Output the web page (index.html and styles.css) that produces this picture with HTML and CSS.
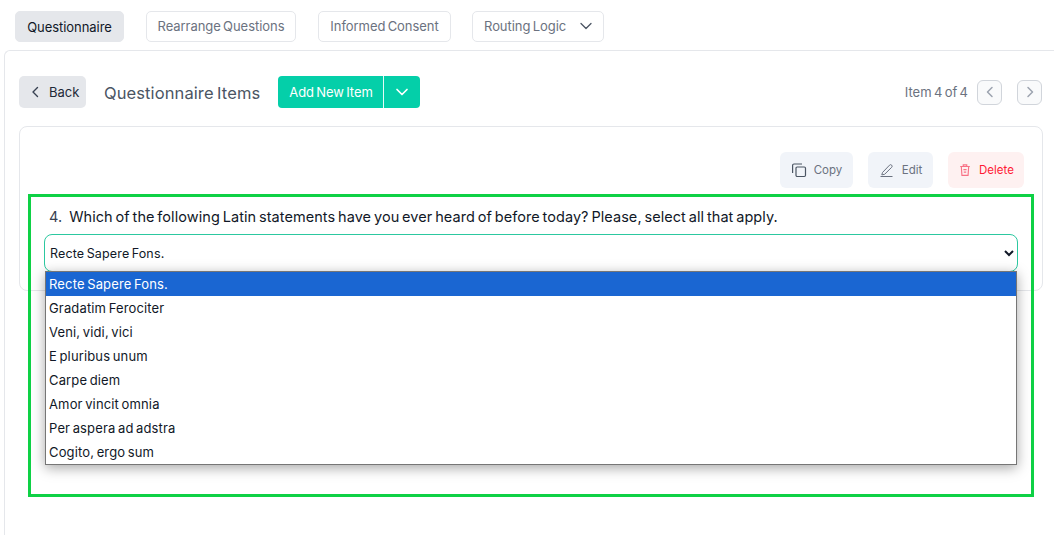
FILE: index.html
```html
<!DOCTYPE html>
<html lang="en">
<head>
<meta charset="utf-8">
<title>Questionnaire Items</title>
<link rel="stylesheet" href="styles.css">
</head>
<body>
<nav class="tabs">
  <a class="tab tab-active">Questionnaire</a>
  <a class="tab tab-rearrange">Rearrange Questions</a>
  <a class="tab tab-consent">Informed Consent</a>
  <a class="tab tab-menu">Routing Logic
    <svg class="tab-chev" viewBox="0 0 14 14" width="14" height="14"><path d="M2 4.5 7 9.5 12 4.5" fill="none" stroke="#4b5563" stroke-width="1.3" stroke-linecap="round" stroke-linejoin="round"/></svg>
  </a>
</nav>
<main class="panel">
  <header class="head">
    <button class="back">
      <svg viewBox="0 0 12 14" width="12" height="14"><path d="M8.5 2.5 4 7l4.5 4.5" fill="none" stroke="#374151" stroke-width="1.4" stroke-linecap="round" stroke-linejoin="round"/></svg>
      Back
    </button>
    <h1 class="title">Questionnaire Items</h1>
    <div class="split">
      <span class="split-main">Add New Item</span>
      <span class="split-arrow"><svg viewBox="0 0 14 14" width="14" height="14"><path d="M2 4.5 7 9.5 12 4.5" fill="none" stroke="#fff" stroke-width="1.7" stroke-linecap="round" stroke-linejoin="round"/></svg></span>
    </div>
    <div class="pager">
      <span class="pager-text">Item 4 of 4</span>
      <span class="pager-btn"><svg viewBox="0 0 14 14" width="14" height="14"><path d="M9 2.5 4.5 7 9 11.5" fill="none" stroke="#9ca3af" stroke-width="1.5" stroke-linecap="round" stroke-linejoin="round"/></svg></span>
      <span class="pager-btn"><svg viewBox="0 0 14 14" width="14" height="14"><path d="M5 2.5 9.5 7 5 11.5" fill="none" stroke="#9ca3af" stroke-width="1.5" stroke-linecap="round" stroke-linejoin="round"/></svg></span>
    </div>
  </header>
  <section class="card">
    <div class="actions">
      <span class="action action-copy">
        <svg viewBox="0 0 16 16" width="16" height="16" fill="none" stroke="#4b5563" stroke-width="1.2"><rect x="5" y="5" width="9.5" height="9.5" rx="1.2"/><path d="M11 2 H3 A1.4 1.4 0 0 0 1.6 3.4 V11"/></svg>
        Copy
      </span>
      <span class="action action-edit">
        <svg viewBox="0 0 16 16" width="16" height="16" fill="none" stroke="#6b7280" stroke-width="1"><path d="M3.5 10.5 10.5 3.2a1.4 1.4 0 0 1 2.2 2.1L5.6 12.3l-2.8.6z"/><path d="M1.5 14.5h12"/></svg>
        Edit
      </span>
      <span class="action action-del">
        <svg viewBox="0 0 16 16" width="14" height="14" fill="none" stroke="#f87185" stroke-width="1.3"><path d="M2.5 4h11M6 4V2.2h4V4M3.8 4l.7 10.2h7L12.2 4M6.2 7.5h3.6M6.6 10.5h2.8"/></svg>
        Delete
      </span>
    </div>
    <div class="annot">
      <p class="question"><span class="qnum">4.</span>Which of the following Latin statements have you ever heard of before today? Please, select all that apply.</p>
      <div class="field">
        <select class="select">
          <option>Recte Sapere Fons.</option>
        </select>
        <ul class="list">
          <li class="opt opt-on">Recte Sapere Fons.</li>
          <li class="opt">Gradatim Ferociter</li>
          <li class="opt">Veni, vidi, vici</li>
          <li class="opt">E pluribus unum</li>
          <li class="opt">Carpe diem</li>
          <li class="opt">Amor vincit omnia</li>
          <li class="opt">Per aspera ad adstra</li>
          <li class="opt">Cogito, ergo sum</li>
        </ul>
      </div>
    </div>
  </section>
</main>
</body>
</html>
```
FILE: styles.css
```css
* { box-sizing: border-box; }
html, body { height: 100%; }
body {
  margin: 0;
  overflow: hidden;
  background: #fff;
  color: #111827;
  font-family: "Inter", "Liberation Sans", sans-serif;
  letter-spacing: 0;
  word-spacing: -1.3px;
}
.tabs {
  display: flex;
  gap: 22px;
  height: 50px;
  padding: 11px 0 0 15px;
}
.tab {
  display: flex;
  align-items: center;
  justify-content: center;
  height: 31px;
  padding-bottom: 1px;
  border: 1px solid #e5e7eb;
  border-radius: 5px;
  font-size: 13px;
  letter-spacing: -0.05px;
  color: #6b7280;
}
.tab-active {
  width: 109px;
  padding-bottom: 0;
  background: #e5e7eb;
  color: #111827;
  border-color: #e5e7eb;
}
.tab-rearrange { width: 150px; }
.tab-consent { width: 133px; margin-right: -1px; }
.tab-menu {
  width: 132px;
  justify-content: flex-start;
  gap: 13px;
  padding-left: 11px;
}
.tab-chev { display: block; }
.panel {
  margin-left: 4px;
  height: 500px;
  padding: 25px 11px 0 14px;
  border: 1px solid #e5e7eb;
  border-right: 0;
  border-radius: 6px 0 0 0;
}
.head {
  display: flex;
  align-items: center;
  height: 32px;
}
.back {
  display: flex;
  align-items: center;
  gap: 8px;
  width: 67px;
  height: 32px;
  padding: 0 0 0 10px;
  border: 0;
  border-radius: 5px;
  background: #e5e7eb;
  color: #1f2937;
  font: inherit;
  font-size: 13px;
  letter-spacing: inherit;
  word-spacing: inherit;
}
.title {
  margin: 2px 18px 0;
  font-size: 16.5px;
  font-weight: 400;
  color: #4b5563;
  letter-spacing: 0.1px;
}
.split {
  display: flex;
  height: 32px;
  border-radius: 4px;
  overflow: hidden;
  background: #04cfa9;
  color: #fff;
  font-size: 13px;
}
.split-main {
  display: flex;
  align-items: center;
  width: 106px;
  padding-left: 11px;
  border-right: 1px solid #e5fbf6;
  letter-spacing: -0.05px;
}
.split-arrow {
  display: flex;
  align-items: center;
  justify-content: center;
  width: 36px;
}
.pager {
  display: flex;
  align-items: center;
  margin-left: auto;
  margin-right: 1px;
  font-size: 13px;
  color: #6b7280;
}
.pager-text { margin-right: 9px; }
.pager-btn {
  display: flex;
  align-items: center;
  justify-content: center;
  width: 25px;
  height: 25px;
  border: 1px solid #d1d5db;
  border-radius: 6px;
  background: #f9fafb;
}
.pager-btn + .pager-btn { margin-left: 15px; }
.card {
  height: 165px;
  margin-top: 18px;
  padding: 25px 18px 0 9px;
  border: 1px solid #e5e7eb;
  border-radius: 8px;
}
.actions {
  display: flex;
  justify-content: flex-end;
  gap: 15px;
  height: 36px;
}
.action {
  display: flex;
  align-items: center;
  justify-content: center;
  gap: 7px;
  border-radius: 6px;
  background: #f1f4f9;
  font-size: 11.5px;
  color: #6b7280;
}
.action-copy { width: 73px; }
.action-edit { width: 65px; }
.action-del {
  width: 76px;
  background: #fef1f1;
  color: #ff1a35;
}
.annot {
  width: 1006px;
  height: 303px;
  margin-top: 6px;
  margin-left: -1px;
  padding: 10px 13px 0 13px;
  border: 3px solid #0ed145;
  position: relative;
}
.question {
  margin: 0 0 7px;
  padding-left: 5px;
  font-size: 14.5px;
  line-height: 20px;
  color: #111827;
  letter-spacing: 0.06px;
}
.qnum { margin-right: 7px; color: #374151; }
.field { position: relative; }
.select {
  display: block;
  width: 974px;
  height: 38px;
  padding: 0 1px;
  border: 1px solid #2cc8a0;
  border-radius: 8px;
  background: #fff;
  color: #111827;
  font-family: inherit;
  font-size: 12.5px;
  letter-spacing: 0.15px;
  word-spacing: -1.3px;
}
.list {
  position: absolute;
  left: 1px;
  top: 37px;
  width: 972px;
  margin: 0;
  padding: 0;
  list-style: none;
  background: #fff;
  border: 1px solid #767676;
  box-shadow: 0 3px 12px rgba(0, 0, 0, 0.35);
}
.opt {
  height: 24px;
  padding: 0 3px;
  font-size: 13px;
  line-height: 24px;
  color: #111827;
  letter-spacing: 0.15px;
}
.opt-on {
  background: #1a66d2;
  color: #fff;
}
```
